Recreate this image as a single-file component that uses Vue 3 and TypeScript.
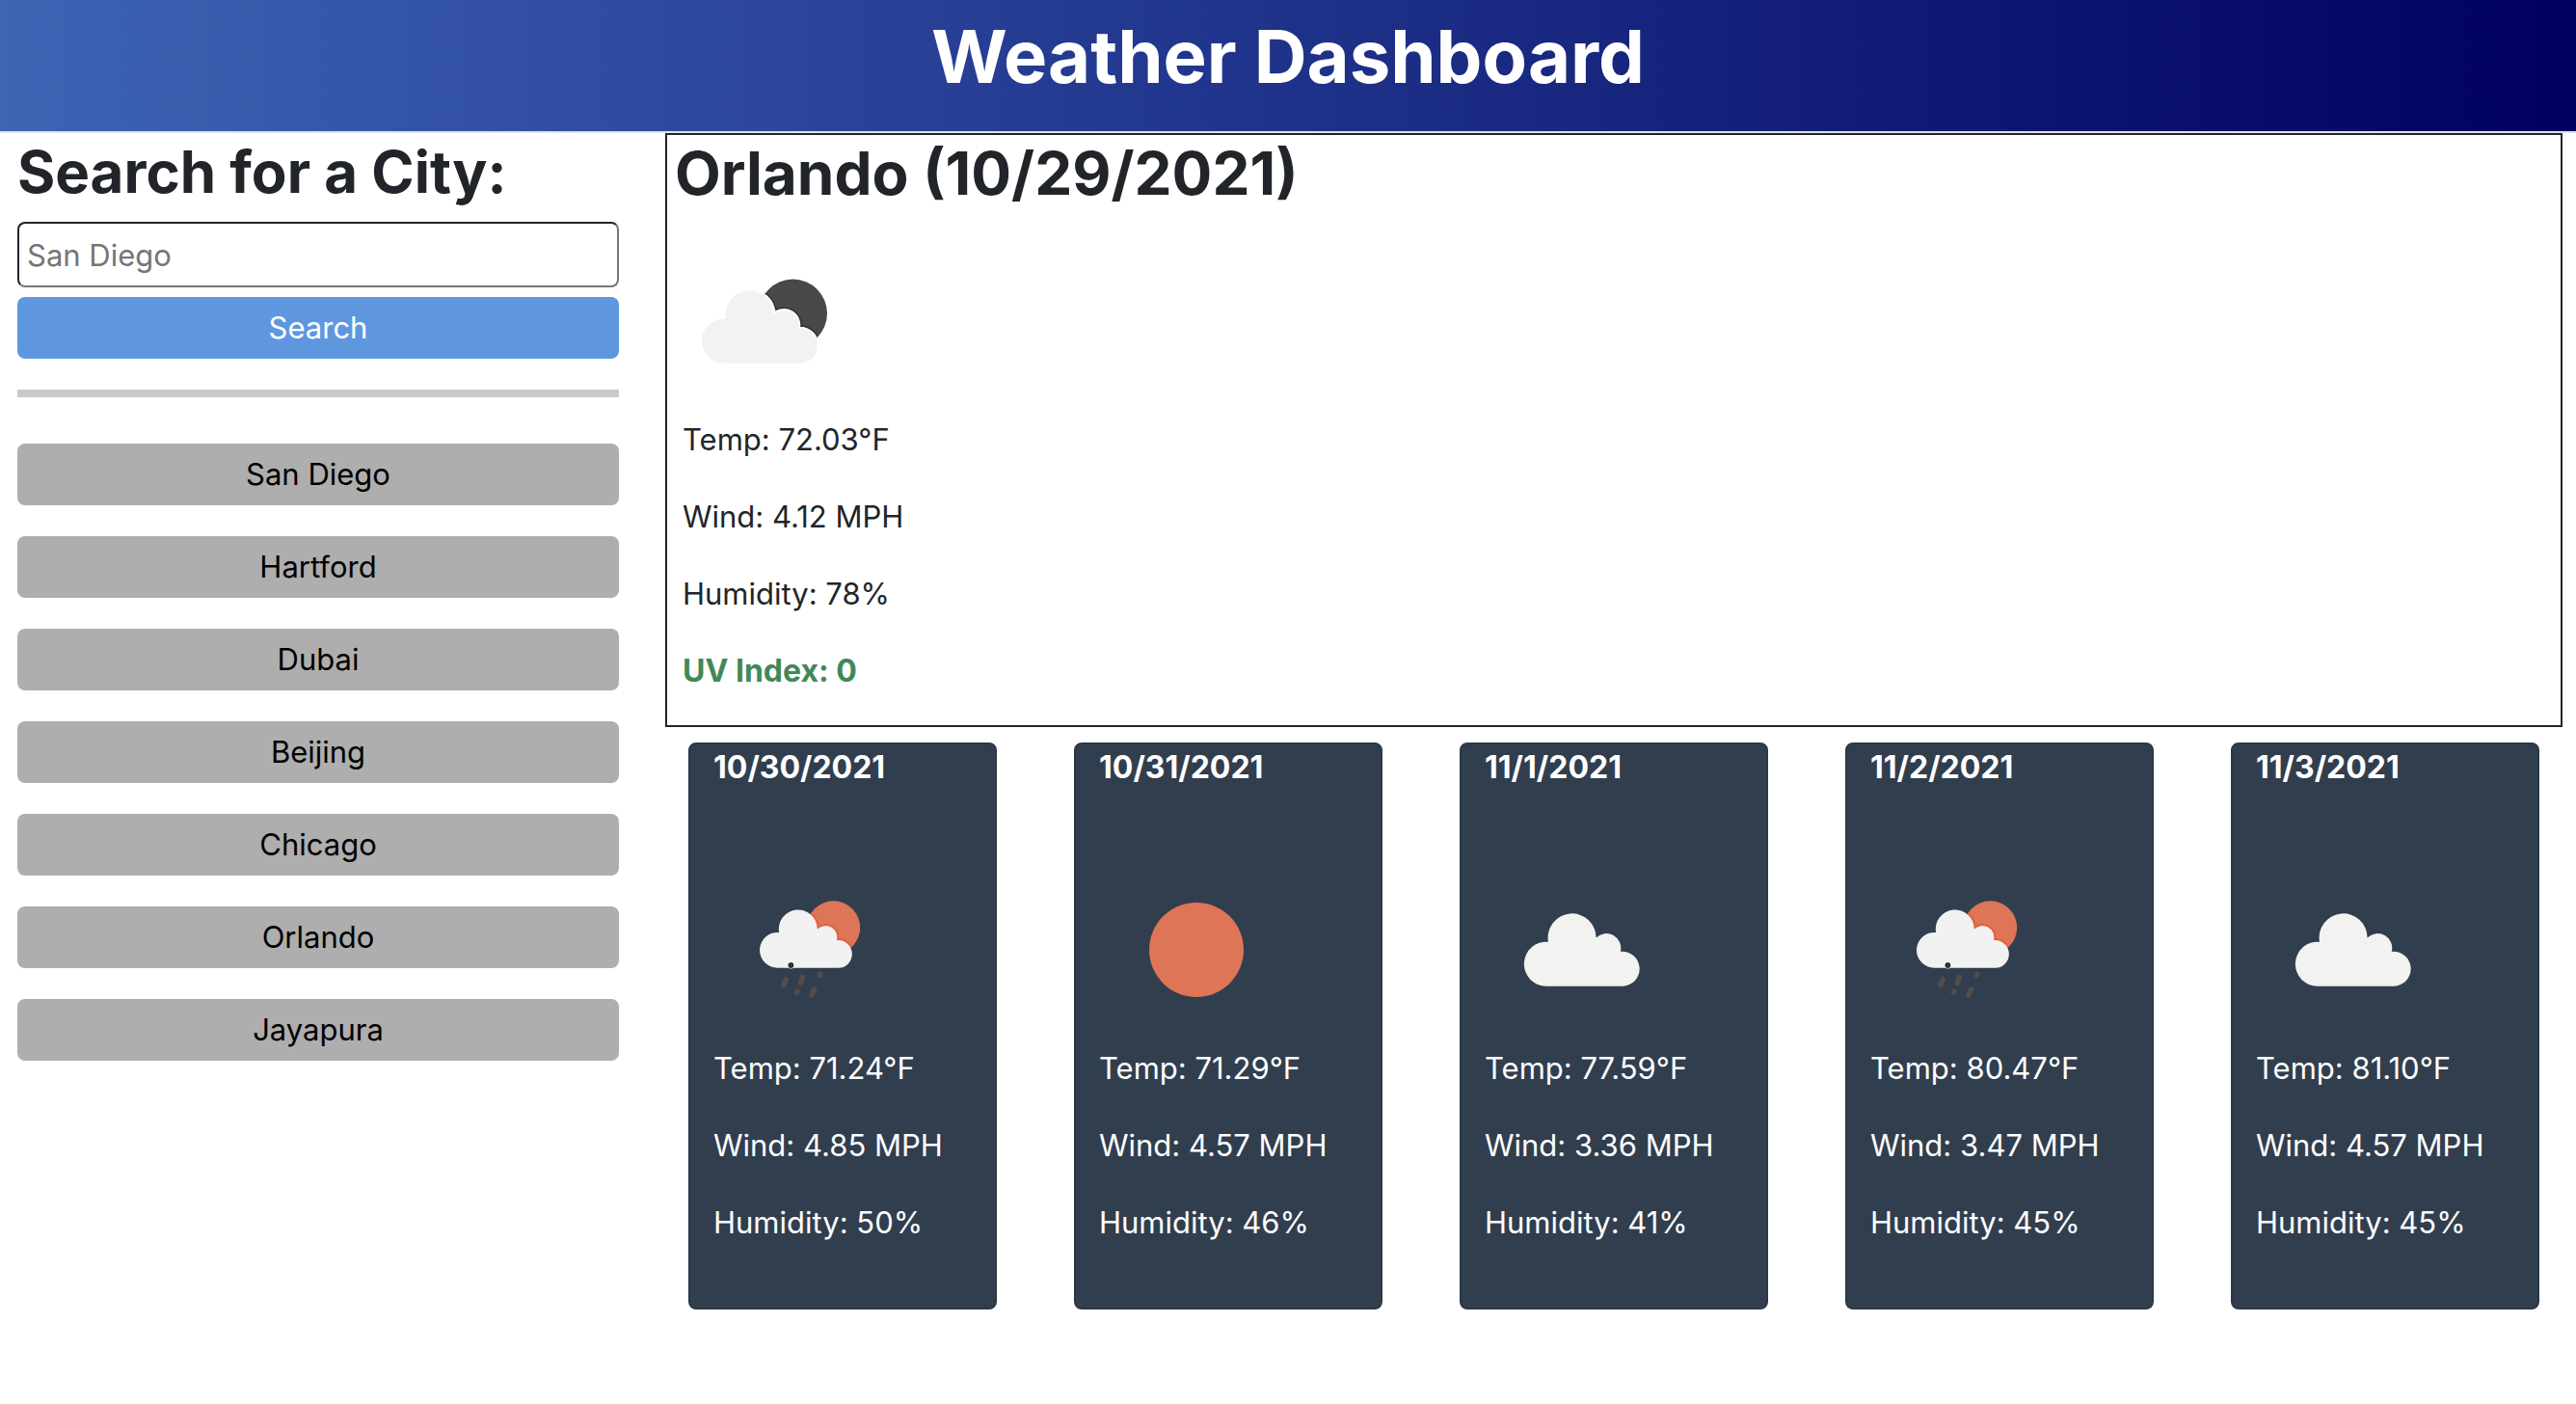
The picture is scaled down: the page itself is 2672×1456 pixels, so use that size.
<script setup lang="ts">
import { ref } from 'vue'

type IconKind = 'night' | 'rain' | 'sun' | 'cloud'

interface Forecast {
  date: string
  icon: IconKind
  temp: string
  wind: string
  humidity: number
}

const query = ref('')
const cities = ['San Diego', 'Hartford', 'Dubai', 'Beijing', 'Chicago', 'Orlando', 'Jayapura']

const forecast: Forecast[] = [
  { date: '10/30/2021', icon: 'rain', temp: '71.24', wind: '4.85', humidity: 50 },
  { date: '10/31/2021', icon: 'sun', temp: '71.29', wind: '4.57', humidity: 46 },
  { date: '11/1/2021', icon: 'cloud', temp: '77.59', wind: '3.36', humidity: 41 },
  { date: '11/2/2021', icon: 'rain', temp: '80.47', wind: '3.47', humidity: 45 },
  { date: '11/3/2021', icon: 'cloud', temp: '81.10', wind: '4.57', humidity: 45 },
]

// Cloud outline: four bumps on a flat base
const cloud =
  'M59 144.7A23 23 0 1 1 61 98.8A25 25 0 1 1 110.6 94.5A15 15 0 0 1 135.8 108.8A18 18 0 1 1 138 144.7Z'
</script>

<template>
  <div class="page">
    <header class="banner">
      <h1>Weather Dashboard</h1>
    </header>

    <div class="layout">
      <aside>
        <form class="search" @submit.prevent>
          <h2><label for="city">Search for a City:</label></h2>
          <input id="city" v-model="query" type="text" placeholder="San Diego" />
          <button type="submit" class="btn primary">Search</button>
        </form>
        <hr />
        <div class="history">
          <button v-for="city in cities" :key="city" type="button" class="btn">{{ city }}</button>
        </div>
      </aside>

      <main>
        <section class="current">
          <h2>Orlando (10/29/2021)</h2>
          <svg class="icon" viewBox="0 0 200 200" role="img" aria-label="Few clouds">
            <clipPath id="moon"><circle cx="130.5" cy="93" r="35.5" /></clipPath>
            <circle cx="130.5" cy="93" r="35.5" fill="#48484a" />
            <g clip-path="url(#moon)">
              <path :d="cloud" fill="none" stroke="#303032" stroke-width="7" />
              <path :d="cloud" fill="none" stroke="#fff" stroke-width="4" />
            </g>
            <path :d="cloud" fill="#f2f2f0" />
          </svg>
          <div class="stats">
            <p>Temp: 72.03°F</p>
            <p>Wind: 4.12 MPH</p>
            <p>Humidity: 78%</p>
            <p class="uv">UV Index: 0</p>
          </div>
        </section>

        <section class="forecast">
          <article v-for="day in forecast" :key="day.date" class="card">
            <h3>{{ day.date }}</h3>
            <svg class="icon" viewBox="0 0 200 200" role="img" :aria-label="day.icon">
              <circle v-if="day.icon === 'sun'" cx="101" cy="101" r="49" fill="#dd7556" />
              <path
                v-else-if="day.icon === 'cloud'"
                :d="cloud"
                transform="translate(5 -6)"
                fill="#f2f2f0"
              />
              <g v-else>
                <clipPath :id="'sun-' + day.date"><circle cx="124.5" cy="78" r="27.7" /></clipPath>
                <circle cx="124.5" cy="78" r="27.7" fill="#dd7556" />
                <g :clip-path="`url(#sun-${day.date})`">
                  <path :d="cloud" transform="translate(19.3 4) scale(.8)" fill="none" stroke="#e2603f" stroke-width="5" />
                </g>
                <path :d="cloud" transform="translate(19.3 4) scale(.8)" fill="#f1f1f2" />
                <circle cx="80.4" cy="116.6" r="4" fill="#fff" />
                <circle cx="80.4" cy="117" r="3" fill="#333" />
                <g stroke="#514d4c" stroke-width="5.4" stroke-linecap="round">
                  <path d="M75.4 131.6L72.6 137.6M92.8 129.4L90 135.4M104.8 142L102 148" />
                  <path d="M110.8 126.4L110.2 127.6M87 144L86.4 145.2" />
                </g>
              </g>
            </svg>
            <div class="stats">
              <p>Temp: {{ day.temp }}°F</p>
              <p>Wind: {{ day.wind }} MPH</p>
              <p>Humidity: {{ day.humidity }}%</p>
            </div>
          </article>
        </section>
      </main>
    </div>
  </div>
</template>

<style>
body {
  margin: 0;
  background: #fff;
}
</style>

<style scoped>
.page {
  color: #212529;
  font-family: Inter, 'Liberation Sans', sans-serif;
  font-size: 31px;
  line-height: 48px;
}

h1,
h2,
h3,
p {
  margin: 0;
}

.banner {
  padding: 10px 0 30px;
  border-bottom: 2px solid #e0e0e8;
  background: linear-gradient(to right, #3e64b4, #00005f);
  color: #fff;
  text-align: center;
}

h1 {
  font-size: 76px;
  line-height: 96px;
}

h2 {
  margin-bottom: 12px;
  font-size: 60px;
  line-height: 80px;
}

h3 {
  font-size: 32px;
}

.layout {
  display: grid;
  grid-template-columns: 624fr 1968fr;
  gap: 48px;
  padding: 0 14px 0 18px;
}

.search {
  display: flex;
  flex-direction: column;
}

input {
  box-sizing: border-box;
  height: 68px;
  margin-bottom: 10px;
  padding: 0 8px;
  border: 2px solid;
  border-color: #212529 #767676 #767676 #212529;
  border-radius: 8px;
  background: #fff;
  color: #212529;
  font: inherit;
}

input::placeholder {
  color: #757575;
  opacity: 1;
}

.btn {
  height: 64px;
  padding: 0;
  border: 0;
  border-radius: 8px;
  background: #aeaeae;
  color: #000;
  font: inherit;
}

.btn.primary {
  background: #5f97df;
  color: #fff;
}

hr {
  height: 8px;
  margin: 32px 0 48px;
  border: 0;
  background: #c8c9ca;
}

.history {
  display: grid;
  gap: 32px;
}

.current {
  padding-bottom: 32px;
  border: 2px solid #212529;
}

.current h2 {
  padding-left: 8px;
  font-size: 62px;
}

.current .stats {
  padding-left: 16px;
}

.icon {
  display: block;
  width: 200px;
  height: 200px;
}

.stats {
  display: grid;
  gap: 32px;
}

.uv {
  color: #418858;
  font-size: 32px;
  font-weight: 700;
}

.forecast {
  display: grid;
  grid-template-columns: repeat(5, 1fr);
  gap: 80px;
  padding: 16px 24px;
}

.card {
  padding: 0 0 64px 24px;
  border: 2px solid #2b3846;
  border-radius: 8px;
  background: #313e4e;
  color: #fff;
}

.card h3 {
  margin-bottom: 64px;
}
</style>
